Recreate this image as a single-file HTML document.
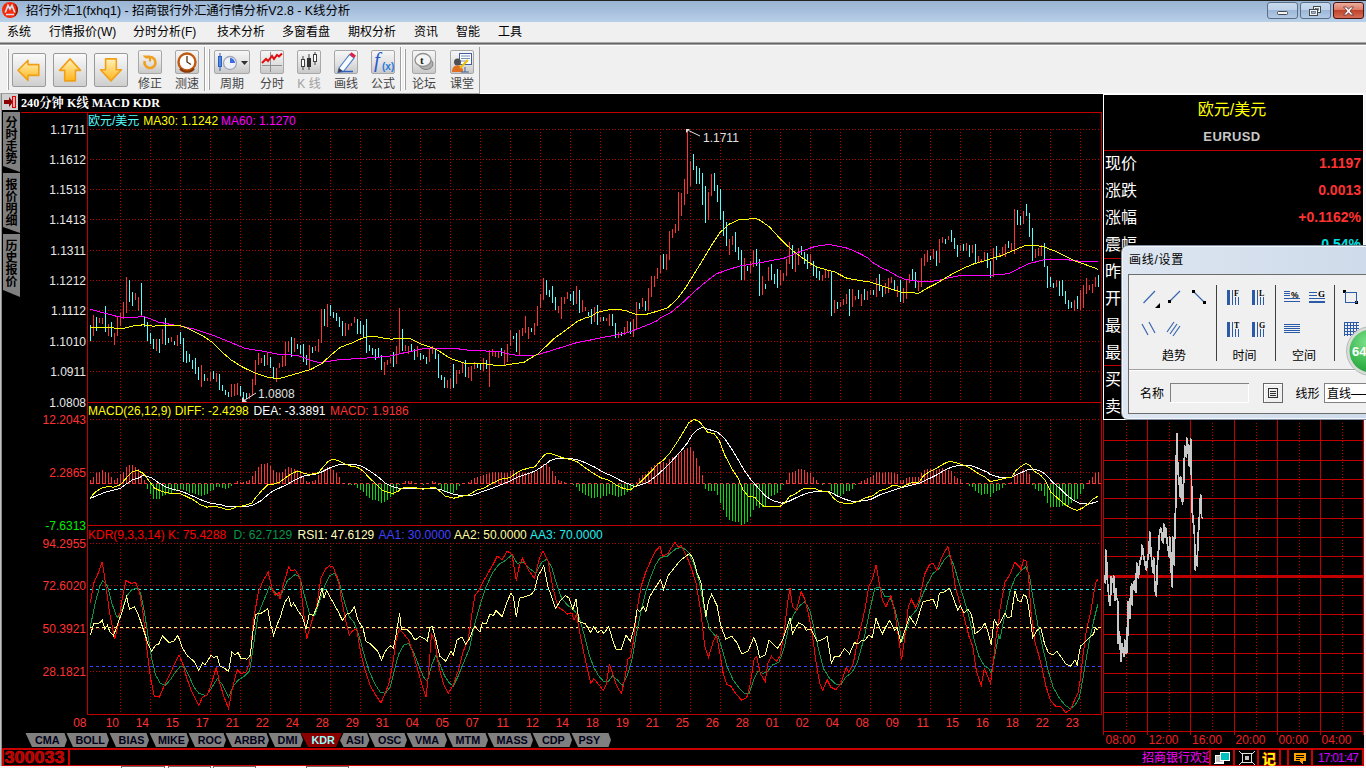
<!DOCTYPE html><html><head><meta charset="utf-8"><title>K线分析</title><style>
*{box-sizing:border-box;margin:0;padding:0}
html,body{width:1366px;height:768px;overflow:hidden;background:#f0f0f0;font-family:"Liberation Sans","Noto Sans CJK SC",sans-serif;font-size:12px}
.abs{position:absolute}
#title{left:0;top:0;width:1366px;height:22px;background:linear-gradient(#9ab5d3 0,#a4bdda 40%,#b9d0e9 100%);border-top:1px solid #222}
#title .t{left:26px;top:2px;font-size:12.4px;color:#000;white-space:nowrap;line-height:17px}
#menu{left:0;top:22px;width:1366px;height:20px;background:#f0f0f0}
#menu span{position:absolute;top:2px;line-height:16px;font-size:12px;color:#000;white-space:nowrap}
#tb{left:0;top:42px;width:1366px;height:52px;background:#f0f0f0}
.big{position:absolute;top:53px;width:34px;height:34px;border:1px solid #9a9a9a;border-radius:2px;background:linear-gradient(#fafafa,#e4e4e4 50%,#cfcfcf)}
.sm{position:absolute;top:50px;width:24px;height:24px;border:1px solid #a8a8a8;border-radius:2px;background:linear-gradient(#f6f6f6,#e2e2e2 55%,#c8c8c8)}
.lb{position:absolute;top:76px;font-size:12px;line-height:16px;color:#5a5a5a;white-space:nowrap;text-align:center;width:40px}
#dlg{left:1121px;top:245px;width:260px;height:175px;background:linear-gradient(90deg,#dde6f1,#cedaea);border:1px solid #7f8ea0;border-radius:7px;box-shadow:inset 0 0 0 1px #f4f8fc}
#dlg .cl{position:absolute;left:6px;top:28px;width:260px;height:140px;background:#f0f0f0;border:1px solid #6d6d6d}
.dt{position:absolute;font-size:12px;line-height:14px;color:#000;white-space:nowrap}
</style></head><body>
<div id="title" class="abs"><svg class="abs" style="left:0px;top:0px" width="20" height="20" viewBox="0 0 20 20"><circle cx="10" cy="9" r="8" fill="#f52a0a"/><path d="M14 2.100A8 8 0 0 1 14 15.900A12 12 0 0 0 14 2.100z" fill="#8a1a00"/><path d="M5.200 11.500L8 4.500L10 8L12 4.500L14.800 11.500" fill="none" stroke="#d4e2f2" stroke-width="1.700" stroke-linejoin="miter"/><path d="M6 13.500H14" stroke="#d4e2f2" stroke-width="1.500"/></svg><div class="abs t">招行外汇1(fxhq1) - 招商银行外汇通行情分析V2.8 - K线分析</div>
<svg class="abs" style="left:1266px;top:0px" width="100" height="20" viewBox="0 0 100 20"><defs><linearGradient id="g1" x1="0" y1="0" x2="0" y2="1"><stop offset="0" stop-color="#c9daee"/><stop offset=".5" stop-color="#bcd0e8"/><stop offset=".5" stop-color="#9db8d8"/><stop offset="1" stop-color="#b4cbe6"/></linearGradient><linearGradient id="g2" x1="0" y1="0" x2="0" y2="1"><stop offset="0" stop-color="#eeb0a0"/><stop offset=".5" stop-color="#d97660"/><stop offset=".5" stop-color="#c0452a"/><stop offset="1" stop-color="#d8705a"/></linearGradient></defs><rect x="1.5" y="1.5" width="30" height="16" rx="2.5" fill="url(#g1)" stroke="#5a6e88"/><rect x="34.500" y="1.5" width="30" height="16" rx="2.500" fill="url(#g1)" stroke="#5a6e88"/><rect x="67.500" y="1.5" width="30" height="16" rx="2.500" fill="url(#g2)" stroke="#4a1410"/><rect x="11.500" y="10.500" width="10" height="3" rx="1" fill="#f4f4f4" stroke="#404850"/><rect x="47.500" y="5.500" width="7" height="6" fill="#f4f4f4" stroke="#404850"/><rect x="49.500" y="7.500" width="3" height="2" fill="#9db8d8" stroke="#404850" stroke-width=".6"/><rect x="43.500" y="8.500" width="8" height="6" fill="#f4f4f4" stroke="#404850"/><rect x="45.500" y="10.500" width="4" height="2" fill="#9db8d8" stroke="#404850" stroke-width=".6"/><path d="M77.500 6l3 0l2 2.300l2-2.300l3 0l-3.600 4l3.600 4l-3 0l-2-2.300l-2 2.300l-3 0l3.600-4z" fill="#fff" stroke="#5a3030" stroke-width=".8"/></svg>
</div>
<div id="menu" class="abs">
<span style="left:7px">系统</span>
<span style="left:49px">行情报价(<u style="text-decoration:none;letter-spacing:0">W</u>)</span>
<span style="left:133px">分时分析(F)</span>
<span style="left:217px">技术分析</span>
<span style="left:282px">多窗看盘</span>
<span style="left:348px">期权分析</span>
<span style="left:414px">资讯</span>
<span style="left:456px">智能</span>
<span style="left:498px">工具</span>
</div>
<div id="tb" class="abs"><div class="abs" style="left:0;top:0;width:1366px;height:1px;background:#a8a8a8"></div><div class="abs" style="left:0;top:1px;width:1366px;height:1px;background:#666"></div><div class="abs" style="left:0;top:2px;width:1366px;height:1px;background:#a0a0a0"></div><div class="abs" style="left:0;top:3px;width:1366px;height:1px;background:#fff"></div><div class="abs" style="left:2px;top:5px;width:478px;height:47px;border-right:1px solid #a0a0a0"></div><div class="abs" style="left:7px;top:7px;width:2px;height:41px;border-left:1px solid #fff;border-right:1px solid #a0a0a0"></div><div class="abs" style="left:204px;top:5px;width:2px;height:44px;border-left:1px solid #a0a0a0;border-right:1px solid #fff"></div><div class="abs" style="left:208px;top:7px;width:2px;height:41px;border-left:1px solid #fff;border-right:1px solid #a0a0a0"></div><div class="abs" style="left:400px;top:5px;width:2px;height:44px;border-left:1px solid #a0a0a0;border-right:1px solid #fff"></div><div class="abs" style="left:404px;top:7px;width:2px;height:41px;border-left:1px solid #fff;border-right:1px solid #a0a0a0"></div><div class="abs" style="left:0;top:51px;width:480px;height:1px;background:#a0a0a0"></div><div class="abs" style="left:480px;top:51px;width:886px;height:1px;background:#fff"></div></div>
<div class="big" style="left:12px"><svg width="32" height="32" viewBox="0 0 32 32"><defs><linearGradient id="og" x1="0" y1="0" x2="0" y2="1"><stop offset="0" stop-color="#fff2b8"/><stop offset="1" stop-color="#ffb41a"/></linearGradient></defs><path d="M5 16.3L15 6.3V10.6H25.8V21.4H15V26.4z" fill="url(#og)" stroke="#f0a018" stroke-width="1.6" stroke-linejoin="round"/></svg></div>
<div class="big" style="left:53px"><svg width="32" height="32" viewBox="0 0 32 32"><path d="M16 4.9L26.5 16.4H21.4V26.9H10.7V16.4H5.6z" fill="url(#og)" stroke="#f0a018" stroke-width="1.6" stroke-linejoin="round"/></svg></div>
<div class="big" style="left:94px"><svg width="32" height="32" viewBox="0 0 32 32"><path d="M16 26.9L26.3 15.7H21.3V4.9H10.6V15.7H5.5z" fill="url(#og)" stroke="#f0a018" stroke-width="1.6" stroke-linejoin="round"/></svg></div>
<div class="sm" style="left:138px;width:24px"><svg width="22" height="22" viewBox="0 0 22 22"><path d="M11 6A5.500 5.500 0 1 1 5.700 10" fill="none" stroke="#f0a020" stroke-width="2.600" stroke-linecap="butt"/><path d="M11 5v5.500" stroke="#f0a020" stroke-width="2.200" fill="none"/><path d="M3.500 4.600h7.500v2.800h-4.300z" fill="#f0a020"/></svg></div><div class="lb" style="left:130px;color:#454545">修正</div>
<div class="sm" style="left:175px;width:24px"><svg width="22" height="22" viewBox="0 0 22 22"><circle cx="11" cy="11" r="8.500" fill="#fff" stroke="#c05a10" stroke-width="2.400"/><path d="M11 5v6l4 2.500" fill="none" stroke="#503010" stroke-width="1.300"/><path d="M4 17.500a9 9 0 0 0 14 0" fill="none" stroke="#8a3a08" stroke-width="2"/></svg></div><div class="lb" style="left:167px;color:#454545">测速</div>
<div class="sm" style="left:214px;width:36px"><svg width="34" height="22" viewBox="0 0 34 22"><rect x="3.500" y="5.500" width="3" height="10" fill="#7ab0f0" stroke="#2a60c0"/><path d="M5 2v18" stroke="#2a60c0"/><circle cx="15" cy="12" r="6.500" fill="#eef2f8" stroke="#a0a8b8" stroke-width="1.300"/><path d="M15 12V7a5 5 0 0 1 5 5z" fill="#3c6be0"/><path d="M26 10h7l-3.500 4z" fill="#303030"/></svg></div><div class="lb" style="left:212px;color:#454545">周期</div>
<div class="sm" style="left:260px;width:24px"><svg width="22" height="22" viewBox="0 0 22 22"><path d="M9.500 1v20M1 14.500h20" stroke="#909090"/><path d="M1 12l4-4l2 2l4-5l2 3l3-4l2 1.500l3-3" fill="none" stroke="#e01010" stroke-width="2"/></svg></div><div class="lb" style="left:252px;color:#454545">分时</div>
<div class="sm" style="left:297px;width:24px"><svg width="22" height="22" viewBox="0 0 22 22"><path d="M5 5v14M11 3v16M17 1v13" stroke="#404040"/><rect x="3.500" y="8.500" width="3" height="7" fill="#fff" stroke="#404040"/><rect x="9.500" y="7.500" width="3" height="8" fill="#303030" stroke="#303030"/><rect x="15.500" y="3.500" width="3" height="7" fill="#fff" stroke="#404040"/></svg></div><div class="lb" style="left:289px;color:#a0a0a0">K 线</div>
<div class="sm" style="left:334px;width:24px"><svg width="22" height="22" viewBox="0 0 22 22"><path d="M4 17L14.500 3.500l4.500 3.500L8.500 20.500l-5.500 1z" fill="#f8fbff" stroke="#5080c8" stroke-width="1.200"/><path d="M14.500 3.500l2-2.200l4.500 3.500l-2 2.200z" fill="#e02040"/><path d="M3 21.500l5.500-1l-4.500-3.500z" fill="#404040"/><path d="M6 20.500h12" stroke="#3060c0" stroke-width="1.500"/></svg></div><div class="lb" style="left:326px;color:#454545">画线</div>
<div class="sm" style="left:371px;width:24px"><svg width="22" height="22" viewBox="0 0 22 22"><text x="2" y="16" font-family="Liberation Serif,serif" font-style="italic" font-size="21" fill="#2a5ad0">f</text><text x="10" y="19" font-family="Liberation Sans,sans-serif" font-size="10" font-weight="bold" fill="#2a7ae0">(x)</text></svg></div><div class="lb" style="left:363px;color:#454545">公式</div>
<div class="sm" style="left:412px;width:24px"><svg width="22" height="22" viewBox="0 0 22 22"><ellipse cx="13" cy="13" rx="7" ry="5.500" fill="#b0b0b0" stroke="#808080"/><ellipse cx="10" cy="9" rx="8" ry="6.500" fill="#f4f4f4" stroke="#909090" stroke-width="1.300"/><text x="7" y="13" font-family="Liberation Serif,serif" font-weight="bold" font-size="11" fill="#202020">t</text></svg></div><div class="lb" style="left:404px;color:#454545">论坛</div>
<div class="sm" style="left:450px;width:24px"><svg width="22" height="22" viewBox="0 0 22 22"><rect x="8.500" y="2.500" width="12" height="11" fill="#fff" stroke="#4060a0"/><path d="M10 5h9M10 7.500h9M10 10h6" stroke="#7090c0"/><circle cx="6.500" cy="11" r="3.500" fill="#505050"/><path d="M1 21c0-5 2.500-6.500 5.500-6.500s5.500 1.500 5.500 6.500z" fill="#e07020"/><path d="M9 17l8-8" stroke="#f0c000" stroke-width="2"/><path d="M14 16v5M10 21h8" stroke="#4060a0"/></svg></div><div class="lb" style="left:442px;color:#454545">课堂</div>
<svg width="1366" height="768" viewBox="0 0 1366 768" style="position:absolute;left:0;top:0" font-family="'Liberation Sans','Noto Sans CJK SC',sans-serif">
<rect x="2" y="94" width="1362" height="672" fill="#000"/>
<g shape-rendering="crispEdges">
<line x1="21" y1="112.5" x2="1102" y2="112.5" stroke="#c00000" stroke-width="1"/>
<line x1="87.5" y1="112" x2="87.5" y2="715" stroke="#c00000" stroke-width="1"/>
<line x1="1101.5" y1="112" x2="1101.5" y2="715" stroke="#c00000" stroke-width="1"/>
<line x1="87" y1="402.5" x2="1102" y2="402.5" stroke="#c00000" stroke-width="1"/>
<line x1="87" y1="525.5" x2="1102" y2="525.5" stroke="#c00000" stroke-width="1"/>
<line x1="87" y1="714.5" x2="1102" y2="714.5" stroke="#c00000" stroke-width="1"/>
<line x1="90" y1="129.5" x2="1101" y2="129.5" stroke="#c00000" stroke-width="1" stroke-dasharray="1 2"/>
<line x1="90" y1="159.5" x2="1101" y2="159.5" stroke="#c00000" stroke-width="1" stroke-dasharray="1 2"/>
<line x1="90" y1="189.5" x2="1101" y2="189.5" stroke="#c00000" stroke-width="1" stroke-dasharray="1 2"/>
<line x1="90" y1="219.5" x2="1101" y2="219.5" stroke="#c00000" stroke-width="1" stroke-dasharray="1 2"/>
<line x1="90" y1="250.5" x2="1101" y2="250.5" stroke="#c00000" stroke-width="1" stroke-dasharray="1 2"/>
<line x1="90" y1="280.5" x2="1101" y2="280.5" stroke="#c00000" stroke-width="1" stroke-dasharray="1 2"/>
<line x1="90" y1="310.5" x2="1101" y2="310.5" stroke="#c00000" stroke-width="1" stroke-dasharray="1 2"/>
<line x1="90" y1="341.5" x2="1101" y2="341.5" stroke="#c00000" stroke-width="1" stroke-dasharray="1 2"/>
<line x1="90" y1="371.5" x2="1101" y2="371.5" stroke="#c00000" stroke-width="1" stroke-dasharray="1 2"/>
<line x1="90" y1="419.5" x2="1101" y2="419.5" stroke="#c00000" stroke-width="1" stroke-dasharray="1 2"/>
<line x1="90" y1="472.5" x2="1101" y2="472.5" stroke="#c00000" stroke-width="1" stroke-dasharray="1 2"/>
<line x1="90" y1="543.5" x2="1101" y2="543.5" stroke="#c00000" stroke-width="1" stroke-dasharray="1 2"/>
<line x1="90" y1="585.5" x2="1101" y2="585.5" stroke="#c00000" stroke-width="1" stroke-dasharray="1 2"/>
<line x1="90" y1="628.5" x2="1101" y2="628.5" stroke="#c00000" stroke-width="1" stroke-dasharray="1 2"/>
<line x1="90" y1="671.5" x2="1101" y2="671.5" stroke="#c00000" stroke-width="1" stroke-dasharray="1 2"/>
<line x1="120.5" y1="129" x2="120.5" y2="402" stroke="#c00000" stroke-width="1" stroke-dasharray="1 2"/>
<line x1="120.5" y1="420" x2="120.5" y2="525" stroke="#c00000" stroke-width="1" stroke-dasharray="1 2"/>
<line x1="120.5" y1="543" x2="120.5" y2="714" stroke="#c00000" stroke-width="1" stroke-dasharray="1 2"/>
<line x1="150.5" y1="129" x2="150.5" y2="402" stroke="#c00000" stroke-width="1" stroke-dasharray="1 2"/>
<line x1="150.5" y1="420" x2="150.5" y2="525" stroke="#c00000" stroke-width="1" stroke-dasharray="1 2"/>
<line x1="150.5" y1="543" x2="150.5" y2="714" stroke="#c00000" stroke-width="1" stroke-dasharray="1 2"/>
<line x1="180.5" y1="129" x2="180.5" y2="402" stroke="#c00000" stroke-width="1" stroke-dasharray="1 2"/>
<line x1="180.5" y1="420" x2="180.5" y2="525" stroke="#c00000" stroke-width="1" stroke-dasharray="1 2"/>
<line x1="180.5" y1="543" x2="180.5" y2="714" stroke="#c00000" stroke-width="1" stroke-dasharray="1 2"/>
<line x1="210.5" y1="129" x2="210.5" y2="402" stroke="#c00000" stroke-width="1" stroke-dasharray="1 2"/>
<line x1="210.5" y1="420" x2="210.5" y2="525" stroke="#c00000" stroke-width="1" stroke-dasharray="1 2"/>
<line x1="210.5" y1="543" x2="210.5" y2="714" stroke="#c00000" stroke-width="1" stroke-dasharray="1 2"/>
<line x1="240.5" y1="129" x2="240.5" y2="402" stroke="#c00000" stroke-width="1" stroke-dasharray="1 2"/>
<line x1="240.5" y1="420" x2="240.5" y2="525" stroke="#c00000" stroke-width="1" stroke-dasharray="1 2"/>
<line x1="240.5" y1="543" x2="240.5" y2="714" stroke="#c00000" stroke-width="1" stroke-dasharray="1 2"/>
<line x1="270.5" y1="129" x2="270.5" y2="402" stroke="#c00000" stroke-width="1" stroke-dasharray="1 2"/>
<line x1="270.5" y1="420" x2="270.5" y2="525" stroke="#c00000" stroke-width="1" stroke-dasharray="1 2"/>
<line x1="270.5" y1="543" x2="270.5" y2="714" stroke="#c00000" stroke-width="1" stroke-dasharray="1 2"/>
<line x1="300.5" y1="129" x2="300.5" y2="402" stroke="#c00000" stroke-width="1" stroke-dasharray="1 2"/>
<line x1="300.5" y1="420" x2="300.5" y2="525" stroke="#c00000" stroke-width="1" stroke-dasharray="1 2"/>
<line x1="300.5" y1="543" x2="300.5" y2="714" stroke="#c00000" stroke-width="1" stroke-dasharray="1 2"/>
<line x1="330.5" y1="129" x2="330.5" y2="402" stroke="#c00000" stroke-width="1" stroke-dasharray="1 2"/>
<line x1="330.5" y1="420" x2="330.5" y2="525" stroke="#c00000" stroke-width="1" stroke-dasharray="1 2"/>
<line x1="330.5" y1="543" x2="330.5" y2="714" stroke="#c00000" stroke-width="1" stroke-dasharray="1 2"/>
<line x1="360.5" y1="129" x2="360.5" y2="402" stroke="#c00000" stroke-width="1" stroke-dasharray="1 2"/>
<line x1="360.5" y1="420" x2="360.5" y2="525" stroke="#c00000" stroke-width="1" stroke-dasharray="1 2"/>
<line x1="360.5" y1="543" x2="360.5" y2="714" stroke="#c00000" stroke-width="1" stroke-dasharray="1 2"/>
<line x1="390.5" y1="129" x2="390.5" y2="402" stroke="#c00000" stroke-width="1" stroke-dasharray="1 2"/>
<line x1="390.5" y1="420" x2="390.5" y2="525" stroke="#c00000" stroke-width="1" stroke-dasharray="1 2"/>
<line x1="390.5" y1="543" x2="390.5" y2="714" stroke="#c00000" stroke-width="1" stroke-dasharray="1 2"/>
<line x1="420.5" y1="129" x2="420.5" y2="402" stroke="#c00000" stroke-width="1" stroke-dasharray="1 2"/>
<line x1="420.5" y1="420" x2="420.5" y2="525" stroke="#c00000" stroke-width="1" stroke-dasharray="1 2"/>
<line x1="420.5" y1="543" x2="420.5" y2="714" stroke="#c00000" stroke-width="1" stroke-dasharray="1 2"/>
<line x1="450.5" y1="129" x2="450.5" y2="402" stroke="#c00000" stroke-width="1" stroke-dasharray="1 2"/>
<line x1="450.5" y1="420" x2="450.5" y2="525" stroke="#c00000" stroke-width="1" stroke-dasharray="1 2"/>
<line x1="450.5" y1="543" x2="450.5" y2="714" stroke="#c00000" stroke-width="1" stroke-dasharray="1 2"/>
<line x1="480.5" y1="129" x2="480.5" y2="402" stroke="#c00000" stroke-width="1" stroke-dasharray="1 2"/>
<line x1="480.5" y1="420" x2="480.5" y2="525" stroke="#c00000" stroke-width="1" stroke-dasharray="1 2"/>
<line x1="480.5" y1="543" x2="480.5" y2="714" stroke="#c00000" stroke-width="1" stroke-dasharray="1 2"/>
<line x1="510.5" y1="129" x2="510.5" y2="402" stroke="#c00000" stroke-width="1" stroke-dasharray="1 2"/>
<line x1="510.5" y1="420" x2="510.5" y2="525" stroke="#c00000" stroke-width="1" stroke-dasharray="1 2"/>
<line x1="510.5" y1="543" x2="510.5" y2="714" stroke="#c00000" stroke-width="1" stroke-dasharray="1 2"/>
<line x1="540.5" y1="129" x2="540.5" y2="402" stroke="#c00000" stroke-width="1" stroke-dasharray="1 2"/>
<line x1="540.5" y1="420" x2="540.5" y2="525" stroke="#c00000" stroke-width="1" stroke-dasharray="1 2"/>
<line x1="540.5" y1="543" x2="540.5" y2="714" stroke="#c00000" stroke-width="1" stroke-dasharray="1 2"/>
<line x1="570.5" y1="129" x2="570.5" y2="402" stroke="#c00000" stroke-width="1" stroke-dasharray="1 2"/>
<line x1="570.5" y1="420" x2="570.5" y2="525" stroke="#c00000" stroke-width="1" stroke-dasharray="1 2"/>
<line x1="570.5" y1="543" x2="570.5" y2="714" stroke="#c00000" stroke-width="1" stroke-dasharray="1 2"/>
<line x1="600.5" y1="129" x2="600.5" y2="402" stroke="#c00000" stroke-width="1" stroke-dasharray="1 2"/>
<line x1="600.5" y1="420" x2="600.5" y2="525" stroke="#c00000" stroke-width="1" stroke-dasharray="1 2"/>
<line x1="600.5" y1="543" x2="600.5" y2="714" stroke="#c00000" stroke-width="1" stroke-dasharray="1 2"/>
<line x1="630.5" y1="129" x2="630.5" y2="402" stroke="#c00000" stroke-width="1" stroke-dasharray="1 2"/>
<line x1="630.5" y1="420" x2="630.5" y2="525" stroke="#c00000" stroke-width="1" stroke-dasharray="1 2"/>
<line x1="630.5" y1="543" x2="630.5" y2="714" stroke="#c00000" stroke-width="1" stroke-dasharray="1 2"/>
<line x1="660.5" y1="129" x2="660.5" y2="402" stroke="#c00000" stroke-width="1" stroke-dasharray="1 2"/>
<line x1="660.5" y1="420" x2="660.5" y2="525" stroke="#c00000" stroke-width="1" stroke-dasharray="1 2"/>
<line x1="660.5" y1="543" x2="660.5" y2="714" stroke="#c00000" stroke-width="1" stroke-dasharray="1 2"/>
<line x1="690.5" y1="129" x2="690.5" y2="402" stroke="#c00000" stroke-width="1" stroke-dasharray="1 2"/>
<line x1="690.5" y1="420" x2="690.5" y2="525" stroke="#c00000" stroke-width="1" stroke-dasharray="1 2"/>
<line x1="690.5" y1="543" x2="690.5" y2="714" stroke="#c00000" stroke-width="1" stroke-dasharray="1 2"/>
<line x1="720.5" y1="129" x2="720.5" y2="402" stroke="#c00000" stroke-width="1" stroke-dasharray="1 2"/>
<line x1="720.5" y1="420" x2="720.5" y2="525" stroke="#c00000" stroke-width="1" stroke-dasharray="1 2"/>
<line x1="720.5" y1="543" x2="720.5" y2="714" stroke="#c00000" stroke-width="1" stroke-dasharray="1 2"/>
<line x1="750.5" y1="129" x2="750.5" y2="402" stroke="#c00000" stroke-width="1" stroke-dasharray="1 2"/>
<line x1="750.5" y1="420" x2="750.5" y2="525" stroke="#c00000" stroke-width="1" stroke-dasharray="1 2"/>
<line x1="750.5" y1="543" x2="750.5" y2="714" stroke="#c00000" stroke-width="1" stroke-dasharray="1 2"/>
<line x1="780.5" y1="129" x2="780.5" y2="402" stroke="#c00000" stroke-width="1" stroke-dasharray="1 2"/>
<line x1="780.5" y1="420" x2="780.5" y2="525" stroke="#c00000" stroke-width="1" stroke-dasharray="1 2"/>
<line x1="780.5" y1="543" x2="780.5" y2="714" stroke="#c00000" stroke-width="1" stroke-dasharray="1 2"/>
<line x1="810.5" y1="129" x2="810.5" y2="402" stroke="#c00000" stroke-width="1" stroke-dasharray="1 2"/>
<line x1="810.5" y1="420" x2="810.5" y2="525" stroke="#c00000" stroke-width="1" stroke-dasharray="1 2"/>
<line x1="810.5" y1="543" x2="810.5" y2="714" stroke="#c00000" stroke-width="1" stroke-dasharray="1 2"/>
<line x1="840.5" y1="129" x2="840.5" y2="402" stroke="#c00000" stroke-width="1" stroke-dasharray="1 2"/>
<line x1="840.5" y1="420" x2="840.5" y2="525" stroke="#c00000" stroke-width="1" stroke-dasharray="1 2"/>
<line x1="840.5" y1="543" x2="840.5" y2="714" stroke="#c00000" stroke-width="1" stroke-dasharray="1 2"/>
<line x1="870.5" y1="129" x2="870.5" y2="402" stroke="#c00000" stroke-width="1" stroke-dasharray="1 2"/>
<line x1="870.5" y1="420" x2="870.5" y2="525" stroke="#c00000" stroke-width="1" stroke-dasharray="1 2"/>
<line x1="870.5" y1="543" x2="870.5" y2="714" stroke="#c00000" stroke-width="1" stroke-dasharray="1 2"/>
<line x1="900.5" y1="129" x2="900.5" y2="402" stroke="#c00000" stroke-width="1" stroke-dasharray="1 2"/>
<line x1="900.5" y1="420" x2="900.5" y2="525" stroke="#c00000" stroke-width="1" stroke-dasharray="1 2"/>
<line x1="900.5" y1="543" x2="900.5" y2="714" stroke="#c00000" stroke-width="1" stroke-dasharray="1 2"/>
<line x1="930.5" y1="129" x2="930.5" y2="402" stroke="#c00000" stroke-width="1" stroke-dasharray="1 2"/>
<line x1="930.5" y1="420" x2="930.5" y2="525" stroke="#c00000" stroke-width="1" stroke-dasharray="1 2"/>
<line x1="930.5" y1="543" x2="930.5" y2="714" stroke="#c00000" stroke-width="1" stroke-dasharray="1 2"/>
<line x1="960.5" y1="129" x2="960.5" y2="402" stroke="#c00000" stroke-width="1" stroke-dasharray="1 2"/>
<line x1="960.5" y1="420" x2="960.5" y2="525" stroke="#c00000" stroke-width="1" stroke-dasharray="1 2"/>
<line x1="960.5" y1="543" x2="960.5" y2="714" stroke="#c00000" stroke-width="1" stroke-dasharray="1 2"/>
<line x1="990.5" y1="129" x2="990.5" y2="402" stroke="#c00000" stroke-width="1" stroke-dasharray="1 2"/>
<line x1="990.5" y1="420" x2="990.5" y2="525" stroke="#c00000" stroke-width="1" stroke-dasharray="1 2"/>
<line x1="990.5" y1="543" x2="990.5" y2="714" stroke="#c00000" stroke-width="1" stroke-dasharray="1 2"/>
<line x1="1020.5" y1="129" x2="1020.5" y2="402" stroke="#c00000" stroke-width="1" stroke-dasharray="1 2"/>
<line x1="1020.5" y1="420" x2="1020.5" y2="525" stroke="#c00000" stroke-width="1" stroke-dasharray="1 2"/>
<line x1="1020.5" y1="543" x2="1020.5" y2="714" stroke="#c00000" stroke-width="1" stroke-dasharray="1 2"/>
<line x1="1050.5" y1="129" x2="1050.5" y2="402" stroke="#c00000" stroke-width="1" stroke-dasharray="1 2"/>
<line x1="1050.5" y1="420" x2="1050.5" y2="525" stroke="#c00000" stroke-width="1" stroke-dasharray="1 2"/>
<line x1="1050.5" y1="543" x2="1050.5" y2="714" stroke="#c00000" stroke-width="1" stroke-dasharray="1 2"/>
<line x1="1080.5" y1="129" x2="1080.5" y2="402" stroke="#c00000" stroke-width="1" stroke-dasharray="1 2"/>
<line x1="1080.5" y1="420" x2="1080.5" y2="525" stroke="#c00000" stroke-width="1" stroke-dasharray="1 2"/>
<line x1="1080.5" y1="543" x2="1080.5" y2="714" stroke="#c00000" stroke-width="1" stroke-dasharray="1 2"/>
<line x1="90" y1="483.5" x2="1101" y2="483.5" stroke="#ff3232" stroke-width="1" stroke-dasharray="3 3"/>
<line x1="90" y1="589.5" x2="1101" y2="589.5" stroke="#20f0f0" stroke-width="1" stroke-dasharray="3 3"/>
<line x1="90" y1="627.5" x2="1101" y2="627.5" stroke="#ffff80" stroke-width="1" stroke-dasharray="3 3"/>
<line x1="90" y1="666.5" x2="1101" y2="666.5" stroke="#4040ff" stroke-width="1" stroke-dasharray="3 3"/>
<path d="M93.5 315V336M99.5 318V323M102.5 318V324M108.5 324V336M114.5 333V345M117.5 317V336M120.5 313V326M123.5 302V319M126.5 277V313M135.5 293V300M138.5 297V311M156.5 339V351M162.5 329V344M171.5 337V342M177.5 335V346M201.5 365V387M207.5 378V381M210.5 372V381M216.5 373V382M231.5 384V397M234.5 384V396M237.5 383V395M249.5 393V399M252.5 379V395M255.5 360V385M258.5 353V365M261.5 358V363M267.5 353V365M276.5 368V382M279.5 363V368M282.5 356V367M285.5 342V366M288.5 341V352M294.5 338V352M309.5 345V369M315.5 346V351M318.5 339V352M321.5 309V343M327.5 304V327M345.5 323V336M348.5 324V330M351.5 323V326M354.5 317V323M384.5 362V375M387.5 360V365M390.5 358V363M396.5 346V364M399.5 308V354M405.5 345V351M408.5 346V354M417.5 346V357M429.5 349V362M432.5 346V354M447.5 380V388M450.5 378V389M456.5 370V384M459.5 370V374M462.5 363V373M468.5 367V378M471.5 366V381M474.5 362V369M483.5 358V371M489.5 350V387M492.5 349V356M495.5 352V357M498.5 352V358M504.5 350V365M507.5 344V362M510.5 330V346M519.5 330V355M522.5 328V336M525.5 316V333M528.5 327V339M534.5 323V335M537.5 306V326M540.5 294V308M543.5 278V300M558.5 306V313M561.5 297V319M564.5 297V304M567.5 292V299M576.5 286V304M582.5 300V312M585.5 307V311M594.5 307V322M600.5 317V322M606.5 318V321M609.5 314V326M618.5 332V338M624.5 327V335M627.5 321V332M633.5 319V337M636.5 302V330M642.5 298V307M648.5 288V311M651.5 276V297M654.5 276V287M657.5 268V279M660.5 255V273M666.5 254V270M669.5 231V260M672.5 229V238M675.5 224V233M678.5 192V231M681.5 193V216M684.5 179V205M687.5 130V194M690.5 161V186M708.5 192V220M711.5 174V196M729.5 239V255M732.5 236V245M744.5 258V280M750.5 261V273M753.5 250V267M762.5 276V295M768.5 267V281M780.5 270V285M783.5 273V281M786.5 259V276M789.5 242V264M795.5 254V272M798.5 248V265M810.5 254V266M822.5 275V281M825.5 270V278M828.5 270V278M834.5 300V313M840.5 302V307M843.5 299V305M846.5 294V304M852.5 289V307M855.5 296V300M861.5 294V306M867.5 291V300M870.5 290V295M876.5 278V297M885.5 283V294M888.5 278V293M891.5 277V283M897.5 286V297M903.5 288V303M906.5 279V299M909.5 274V283M918.5 281V291M921.5 258V287M924.5 254V266M927.5 250V262M933.5 249V259M939.5 239V263M942.5 237V243M948.5 236V240M960.5 245V251M966.5 243V251M972.5 245V253M978.5 256V263M981.5 259V263M984.5 252V261M993.5 248V277M999.5 253V257M1002.5 247V255M1005.5 244V257M1011.5 243V251M1014.5 209V254M1023.5 211V224M1035.5 249V258M1038.5 248V256M1041.5 245V256M1056.5 280V287M1074.5 300V311M1080.5 290V310M1083.5 285V308M1086.5 278V294M1089.5 285V290M1092.5 284V293M1095.5 277V287" stroke="#ff3232" stroke-width="1" fill="none"/>
<path d="M90.5 325V341M96.5 317V331M105.5 306V332M111.5 322V337M129.5 280V302M132.5 292V306M141.5 283V316M144.5 317V327M147.5 322V341M150.5 333V344M153.5 339V349M159.5 339V353M165.5 318V345M168.5 338V343M174.5 341V345M180.5 332V344M183.5 338V362M186.5 351V363M189.5 354V362M192.5 360V369M195.5 358V374M198.5 367V380M204.5 374V381M213.5 371V379M219.5 374V390M222.5 385V391M225.5 390V395M228.5 392V397M240.5 386V396M243.5 392V401M246.5 393V399M264.5 355V366M270.5 357V368M273.5 367V378M291.5 337V357M297.5 344V349M300.5 345V354M303.5 344V362M306.5 355V365M312.5 347V353M324.5 309V326M330.5 305V316M333.5 312V318M336.5 313V321M339.5 317V327M342.5 321V336M357.5 319V334M360.5 321V334M363.5 325V338M366.5 319V353M369.5 345V351M372.5 348V355M375.5 349V360M378.5 348V358M381.5 355V370M393.5 352V367M402.5 329V351M411.5 344V352M414.5 349V360M420.5 353V360M423.5 355V359M426.5 357V364M435.5 348V359M438.5 354V378M441.5 375V380M444.5 377V388M453.5 364V388M465.5 360V377M477.5 364V368M480.5 364V370M486.5 360V369M501.5 348V356M513.5 336V339M516.5 333V352M531.5 328V332M546.5 280V295M549.5 290V297M552.5 286V303M555.5 297V310M570.5 294V301M573.5 291V305M579.5 290V313M588.5 312V316M591.5 309V324M597.5 305V325M603.5 317V321M612.5 314V326M615.5 323V338M621.5 332V336M630.5 322V334M639.5 303V309M645.5 301V311M663.5 254V269M693.5 154V170M696.5 166V184M699.5 168V184M702.5 173V205M705.5 186V223M714.5 173V191M717.5 185V202M720.5 189V220M723.5 211V236M726.5 222V246M735.5 232V252M738.5 247V260M741.5 250V280M747.5 266V271M756.5 249V266M759.5 259V296M765.5 284V289M771.5 264V280M774.5 274V284M777.5 269V288M792.5 245V269M801.5 246V255M804.5 252V264M807.5 254V269M813.5 261V276M816.5 266V278M819.5 271V280M831.5 272V316M837.5 302V309M849.5 289V316M858.5 290V299M864.5 289V300M873.5 290V295M879.5 274V291M882.5 286V297M894.5 280V290M900.5 280V302M912.5 269V280M915.5 272V288M930.5 256V260M936.5 251V266M945.5 239V244M951.5 230V242M954.5 238V249M957.5 245V257M963.5 244V251M969.5 245V257M975.5 244V264M987.5 253V268M990.5 261V278M996.5 246V260M1008.5 241V248M1017.5 210V225M1020.5 216V225M1026.5 204V216M1029.5 213V237M1032.5 228V261M1044.5 243V267M1047.5 266V288M1050.5 277V287M1053.5 283V288M1059.5 281V296M1062.5 280V296M1065.5 291V304M1068.5 300V309M1071.5 302V308M1077.5 296V309M1098.5 275V287" stroke="#54ffff" stroke-width="1" fill="none"/>
<path d="M90.5 480V484M93.5 477V484M96.5 473V484M99.5 472V484M102.5 470V484M105.5 472V484M108.5 473V484M111.5 477V484M114.5 480V484M117.5 478V484M120.5 474V484M123.5 472V484M126.5 467V484M129.5 465V484M132.5 465V484M135.5 467V484M138.5 469V484M141.5 474V484M144.5 480V484M237.5 481V484M240.5 482V484M243.5 482V484M246.5 481V484M249.5 480V484M252.5 476V484M255.5 471V484M258.5 467V484M261.5 464V484M264.5 464V484M267.5 463V484M270.5 466V484M273.5 470V484M276.5 472V484M279.5 473V484M282.5 472V484M285.5 469V484M288.5 467V484M291.5 468V484M294.5 469V484M297.5 470V484M300.5 473V484M303.5 477V484M306.5 481V484M309.5 482V484M312.5 481V484M315.5 480V484M318.5 475V484M321.5 471V484M324.5 469V484M327.5 467V484M330.5 468V484M333.5 470V484M336.5 473V484M339.5 477V484M405.5 481V484M408.5 481V484M411.5 481V484M432.5 481V484M435.5 482V484M468.5 482V484M471.5 480V484M474.5 478V484M477.5 477V484M480.5 476V484M483.5 475V484M486.5 474V484M489.5 473V484M492.5 472V484M495.5 472V484M498.5 472V484M501.5 472V484M504.5 473V484M507.5 473V484M510.5 471V484M513.5 470V484M516.5 473V484M519.5 473V484M522.5 473V484M525.5 473V484M528.5 472V484M531.5 472V484M534.5 472V484M537.5 471V484M540.5 468V484M543.5 464V484M546.5 464V484M549.5 467V484M552.5 471V484M555.5 476V484M558.5 480V484M561.5 481V484M564.5 482V484M636.5 482V484M639.5 478V484M642.5 475V484M645.5 474V484M648.5 471V484M651.5 467V484M654.5 465V484M657.5 463V484M660.5 461V484M663.5 462V484M666.5 463V484M669.5 459V484M672.5 457V484M675.5 456V484M678.5 454V484M681.5 452V484M684.5 450V484M687.5 448V484M690.5 447V484M693.5 451V484M696.5 458V484M699.5 466V484M702.5 475V484M786.5 480V484M789.5 473V484M792.5 472V484M795.5 471V484M798.5 469V484M801.5 469V484M804.5 470V484M807.5 472V484M810.5 473V484M813.5 477V484M816.5 480V484M861.5 481V484M864.5 480V484M867.5 478V484M870.5 477V484M873.5 475V484M876.5 472V484M879.5 472V484M882.5 473V484M885.5 472V484M888.5 472V484M891.5 472V484M894.5 473V484M897.5 474V484M900.5 480V484M903.5 480V484M906.5 478V484M909.5 477V484M912.5 477V484M915.5 477V484M918.5 477V484M921.5 473V484M924.5 470V484M927.5 469V484M930.5 469V484M933.5 469V484M936.5 470V484M939.5 469V484M942.5 468V484M945.5 469V484M948.5 470V484M951.5 471V484M954.5 476V484M957.5 478V484M960.5 479V484M1011.5 482V484M1014.5 474V484M1017.5 474V484M1020.5 473V484M1023.5 469V484M1026.5 470V484M1029.5 474V484M1089.5 480V484M1092.5 477V484M1095.5 473V484M1098.5 472V484" stroke="#ff3232" stroke-width="1" fill="none"/>
<path d="M147.5 484V489M150.5 484V494M153.5 484V499M156.5 484V499M159.5 484V499M162.5 484V496M165.5 484V495M168.5 484V494M171.5 484V493M174.5 484V491M177.5 484V490M180.5 484V489M183.5 484V490M186.5 484V491M189.5 484V493M192.5 484V493M195.5 484V494M198.5 484V495M201.5 484V496M204.5 484V495M207.5 484V494M210.5 484V491M213.5 484V490M216.5 484V487M219.5 484V487M222.5 484V488M225.5 484V489M228.5 484V488M231.5 484V486M348.5 484V485M351.5 484V485M354.5 484V485M357.5 484V488M360.5 484V490M363.5 484V492M366.5 484V496M369.5 484V498M372.5 484V500M375.5 484V500M378.5 484V501M381.5 484V503M384.5 484V502M387.5 484V500M390.5 484V497M393.5 484V495M396.5 484V491M399.5 484V485M423.5 484V485M438.5 484V485M441.5 484V489M444.5 484V491M447.5 484V493M450.5 484V494M453.5 484V493M456.5 484V490M459.5 484V486M573.5 484V485M576.5 484V487M579.5 484V491M582.5 484V493M585.5 484V495M588.5 484V496M591.5 484V498M594.5 484V498M597.5 484V497M600.5 484V498M603.5 484V496M606.5 484V496M609.5 484V494M612.5 484V495M615.5 484V496M618.5 484V497M621.5 484V496M624.5 484V495M627.5 484V492M630.5 484V491M633.5 484V487M705.5 484V489M708.5 484V491M711.5 484V491M714.5 484V491M717.5 484V495M720.5 484V503M723.5 484V510M726.5 484V517M729.5 484V520M732.5 484V521M735.5 484V522M738.5 484V522M741.5 484V525M744.5 484V524M747.5 484V522M750.5 484V517M753.5 484V510M756.5 484V506M759.5 484V508M762.5 484V507M765.5 484V506M768.5 484V498M771.5 484V496M774.5 484V495M777.5 484V493M780.5 484V490M783.5 484V485M822.5 484V485M831.5 484V491M834.5 484V495M837.5 484V497M840.5 484V496M843.5 484V494M846.5 484V491M849.5 484V491M852.5 484V489M855.5 484V485M969.5 484V486M972.5 484V487M975.5 484V491M978.5 484V493M981.5 484V495M984.5 484V494M987.5 484V494M990.5 484V497M993.5 484V493M996.5 484V491M999.5 484V490M1002.5 484V488M1005.5 484V485M1032.5 484V485M1035.5 484V489M1038.5 484V491M1041.5 484V491M1044.5 484V496M1047.5 484V503M1050.5 484V507M1053.5 484V507M1056.5 484V507M1059.5 484V507M1062.5 484V506M1065.5 484V506M1068.5 484V505M1071.5 484V503M1074.5 484V501M1077.5 484V499M1080.5 484V494M1083.5 484V489" stroke="#00e000" stroke-width="1" fill="none"/>
</g>
<polyline points="90.5,309.3 105.1,313.3 117.8,316.6 124.2,317.9 136.0,317.5 141.5,316.0 147.9,317.9 157.9,321.9 172.5,324.8 183.5,326.6 194.4,329.2 212.6,335.2 230.9,342.5 245.4,348.5 260.0,350.7 274.6,353.4 280.0,354.7 290.9,354.9 300.1,356.2 309.2,359.8 318.3,362.5 327.4,361.6 338.3,359.8 352.9,358.9 367.5,358.0 378.5,357.1 389.4,356.2 404.0,352.9 414.9,350.7 420.4,349.2 431.3,348.0 444.1,348.0 458.7,348.9 469.6,350.3 475.0,350.7 489.6,351.1 500.5,351.6 507.8,353.8 516.9,355.3 535.2,355.3 547.9,351.6 562.5,347.1 577.1,342.5 591.7,339.8 602.6,337.4 615.4,335.2 626.3,333.0 639.1,328.3 650.0,323.9 657.3,320.6 660.0,318.0 670.9,312.5 681.9,303.4 696.5,289.7 707.4,280.6 716.5,273.7 729.3,269.3 740.2,266.0 751.2,264.2 762.1,262.4 773.0,260.2 784.0,258.2 794.9,253.8 805.9,249.6 815.0,246.5 824.1,245.1 828.6,244.2 835.0,245.6 846.0,247.8 850.0,249.3 859.1,253.3 867.3,257.5 872.8,262.6 881.0,267.5 888.3,270.8 897.4,276.2 904.7,279.3 913.8,280.8 924.7,281.5 937.5,280.8 948.5,277.9 959.4,275.7 974.0,275.1 992.2,275.1 997.7,274.6 1000.0,274.5 1009.3,273.6 1018.6,268.5 1028.8,263.5 1036.4,261.8 1044.0,259.6 1055.8,259.2 1067.7,259.7 1074.5,260.9 1088.0,261.3 1098.2,261.3" fill="none" stroke="#ff00ff" stroke-width="1" shape-rendering="crispEdges" />
<polyline points="90.5,327.4 105.1,327.0 117.8,328.4 124.2,328.3 132.4,326.1 143.3,324.8 152.5,326.1 165.2,325.7 179.8,325.5 188.9,328.8 201.7,335.2 212.6,342.5 223.6,353.4 230.9,359.8 241.8,366.7 254.6,372.9 267.3,377.1 276.4,378.6 280.0,378.4 290.9,375.3 300.1,372.6 311.0,369.3 321.9,363.5 330.1,355.8 340.2,347.4 352.9,342.5 362.0,338.3 369.3,336.5 376.6,336.6 383.9,338.3 391.2,339.2 400.3,338.3 409.4,338.3 420.4,343.8 431.3,347.4 438.6,350.7 449.6,358.0 456.8,360.7 466.0,363.5 475.1,363.5 475.0,363.8 485.9,364.0 495.1,365.3 504.2,365.3 513.3,363.8 524.2,362.2 531.5,357.5 538.8,353.5 546.1,346.2 553.4,338.9 560.7,333.9 569.8,327.0 577.1,321.5 584.4,318.3 591.7,316.1 597.2,312.4 606.3,310.2 612.6,309.3 624.5,310.2 631.8,313.0 636.3,314.6 646.4,314.3 657.3,311.2 660.0,310.2 667.3,308.0 676.4,299.8 685.5,287.9 692.8,276.1 701.9,261.5 711.0,246.0 720.2,232.3 729.3,224.1 738.4,219.9 749.3,219.0 754.8,218.3 759.4,219.9 769.4,226.9 778.5,236.9 787.6,246.0 794.9,252.4 802.2,257.8 809.5,262.8 816.8,267.0 824.1,269.1 835.0,272.1 846.0,277.9 850.0,278.8 860.9,280.6 870.1,282.1 881.0,285.7 891.9,289.4 902.9,292.5 912.0,292.6 918.4,293.4 926.6,288.5 935.7,283.9 944.8,278.4 953.9,273.0 963.0,268.4 974.0,263.8 984.9,260.7 995.9,257.1 1000.0,256.2 1008.5,252.5 1016.9,249.1 1025.4,245.4 1036.4,245.4 1044.0,247.0 1054.2,250.8 1064.3,255.5 1074.5,260.9 1084.6,264.3 1093.1,267.4 1098.2,269.4" fill="none" stroke="#ffff00" stroke-width="1" shape-rendering="crispEdges" />
<polyline points="90.1,498.5 96.8,495.6 105.3,492.2 113.8,490.0 120.5,488.3 126.5,483.8 132.4,479.9 139.2,477.8 143.4,475.3 151.0,477.5 157.8,482.1 166.2,487.2 174.7,489.7 181.5,491.4 189.9,494.8 200.1,499.5 210.2,503.2 220.4,504.6 228.8,507.0 240.7,506.6 251.7,505.8 261.0,500.7 267.8,494.8 272.8,491.0 279.6,488.0 288.1,483.8 296.5,479.2 303.3,476.2 310.1,475.0 314.3,474.6 315.0,474.5 321.8,471.9 330.2,467.7 338.7,464.8 348.8,464.3 359.0,465.2 365.8,468.5 372.5,472.8 379.3,477.8 386.1,483.8 392.8,486.6 399.6,488.3 409.8,488.5 419.9,488.5 433.5,488.5 440.2,489.4 448.7,492.7 455.5,494.8 463.9,495.6 472.4,495.3 480.8,492.2 491.0,488.8 501.2,484.6 509.6,481.2 518.1,477.0 526.5,474.1 535.0,471.1 541.8,466.8 544.3,464.6 545.0,464.8 550.1,460.6 556.8,458.4 570.4,458.4 578.8,460.1 587.3,463.5 595.8,467.7 604.2,472.8 612.7,476.2 621.2,480.9 629.6,484.3 634.7,486.6 641.5,484.6 648.2,482.1 655.0,477.0 663.5,469.4 671.9,460.9 680.4,451.6 687.2,443.2 692.2,434.7 697.3,429.6 702.4,427.6 709.2,429.6 717.6,432.2 724.4,438.1 731.2,448.2 737.9,459.2 744.7,471.1 751.5,480.4 758.2,488.0 765.0,495.6 770.1,499.0 774.3,501.2 775.0,501.2 781.8,503.2 788.5,501.5 798.7,496.5 808.8,492.6 817.3,491.4 829.2,491.4 835.9,495.3 844.4,499.0 851.2,501.2 859.6,501.2 869.8,499.8 879.9,494.8 890.1,491.4 900.2,488.0 910.4,485.5 920.5,482.9 929.0,478.7 937.5,474.5 945.9,469.4 952.7,466.8 959.5,465.2 969.6,465.2 978.1,468.2 986.5,471.9 989.9,473.8 990.0,474.5 998.5,477.0 1012.0,477.0 1020.5,472.8 1028.9,469.4 1039.1,470.2 1045.8,474.5 1052.6,482.1 1059.4,488.0 1066.2,494.8 1072.9,499.8 1079.7,503.6 1088.2,504.1 1094.9,502.4 1098.0,501.2" fill="none" stroke="#ffffff" stroke-width="1" shape-rendering="crispEdges" />
<polyline points="90.1,497.8 96.0,491.4 101.9,488.0 107.8,486.6 113.8,487.2 120.5,484.6 126.5,477.8 132.4,471.9 137.5,470.2 143.4,473.6 149.3,481.2 154.4,488.0 159.5,490.5 166.2,492.7 173.0,493.4 179.8,493.4 186.5,496.5 193.3,499.8 200.1,504.6 206.8,507.1 213.6,506.3 220.4,507.5 225.5,509.2 230.5,509.2 237.3,506.6 244.1,505.8 251.7,503.2 255.9,497.3 261.8,490.5 267.8,484.6 272.8,484.3 279.6,482.1 286.4,477.0 293.2,472.8 298.2,471.1 303.3,473.1 308.4,474.5 313.5,473.8 315.0,473.6 318.4,472.8 322.6,467.7 327.7,461.8 332.8,459.2 337.8,460.4 343.8,463.5 350.5,466.0 357.3,467.2 363.2,471.1 369.2,477.8 375.9,483.8 382.7,490.5 387.8,492.2 392.8,493.4 397.9,491.4 401.3,488.3 406.4,487.5 412.3,487.5 416.5,488.0 423.3,489.2 430.1,488.0 435.2,487.7 440.2,491.4 445.3,496.1 450.4,497.3 453.8,498.2 460.5,496.5 469.0,494.8 475.8,490.5 484.2,488.0 492.7,482.9 501.2,479.2 509.6,477.8 515.5,473.6 521.5,470.2 528.2,468.2 535.0,466.8 540.1,460.1 544.3,455.0 545.0,454.2 550.1,453.3 555.2,455.0 561.9,457.5 570.4,459.6 577.2,461.8 583.9,466.8 592.4,472.8 600.8,477.8 609.3,480.4 617.8,486.0 624.5,488.8 630.5,489.7 636.4,485.5 643.2,479.5 649.9,472.8 656.7,465.2 663.5,460.1 670.2,452.5 677.0,442.3 683.8,431.3 688.8,422.8 693.9,419.5 699.0,421.2 703.2,426.2 707.5,432.2 714.2,433.8 719.3,440.6 724.4,454.2 731.2,467.7 737.9,477.8 743.0,489.7 748.1,496.1 754.8,497.3 759.9,503.2 765.0,507.0 773.5,506.6 775.0,507.0 780.1,506.3 785.2,502.4 789.4,496.5 795.3,493.9 802.1,489.2 808.8,488.0 814.8,488.3 819.0,490.5 829.2,492.2 833.4,498.2 839.3,502.4 846.1,503.6 851.2,503.7 857.9,501.5 864.7,498.2 873.2,495.6 879.9,490.5 886.7,488.8 891.8,485.8 896.8,485.5 901.9,487.2 907.0,484.6 912.1,482.6 918.8,482.6 923.9,475.3 930.7,471.1 937.5,467.7 944.2,463.5 950.2,461.3 956.1,462.6 962.8,464.8 969.6,467.7 976.4,472.4 984.8,477.0 989.1,480.4 990.0,481.6 996.8,480.4 1005.2,478.2 1012.0,477.0 1015.4,471.1 1020.5,466.8 1025.5,463.5 1029.8,465.2 1034.0,471.1 1040.8,475.3 1045.8,481.2 1050.9,492.2 1057.7,498.2 1064.5,504.1 1071.2,508.3 1077.2,510.3 1082.2,508.3 1088.2,503.6 1093.2,499.0 1098.0,496.1" fill="none" stroke="#ffff00" stroke-width="1" shape-rendering="crispEdges" />
<polyline points="90.4,626.5 94.9,604.3 99.9,585.7 102.8,580.7 107.3,585.7 112.2,604.3 117.2,617.9 122.1,609.2 127.1,595.6 132.0,589.4 137.0,588.2 140.7,593.1 144.4,611.7 148.1,636.4 151.8,658.7 155.5,674.8 160.5,683.5 165.4,685.2 170.4,679.8 175.3,672.3 180.3,666.1 184.0,666.1 189.0,676.0 193.9,687.2 198.9,693.4 206.3,695.8 211.2,688.4 217.4,678.5 222.4,684.7 228.6,697.1 233.5,685.9 238.5,679.8 244.7,676.0 249.6,671.1 253.3,646.3 258.3,614.2 263.2,601.8 269.4,586.9 273.1,590.6 278.1,595.6 280.0,596.8 287.4,580.7 294.9,574.6 299.8,577.0 304.8,596.8 309.7,614.2 314.7,615.4 319.6,601.8 324.6,585.7 329.5,575.8 334.5,573.3 339.4,583.2 344.4,601.8 349.3,616.6 354.3,622.8 359.2,636.4 364.2,655.0 369.1,671.1 375.3,684.7 380.2,692.1 385.2,693.4 390.1,687.2 395.1,667.4 398.8,653.8 403.8,645.1 408.7,643.4 413.7,652.5 418.6,664.9 423.6,677.3 427.3,681.0 432.2,663.7 435.9,655.0 439.7,663.7 444.6,676.0 449.6,683.5 453.3,685.9 458.2,676.0 463.2,663.7 469.4,648.8 474.3,625.3 475.0,622.8 480.0,605.5 486.1,586.9 492.3,573.3 498.5,564.7 504.7,560.9 512.1,554.8 517.1,563.4 523.3,562.2 529.5,568.4 535.6,573.3 541.8,562.2 546.8,559.2 551.7,567.1 556.7,584.5 561.6,598.1 567.8,605.5 574.0,610.4 579.0,616.6 583.9,634.0 588.9,653.8 593.8,667.4 598.8,676.0 603.7,681.5 608.7,681.0 612.4,676.0 617.3,679.8 622.3,685.4 627.2,676.0 632.2,658.7 635.9,636.4 640.8,611.7 645.8,591.9 650.7,577.0 655.7,564.7 660.6,557.2 666.8,556.7 670.0,553.5 676.2,548.6 682.4,547.3 688.6,552.3 693.5,563.4 699.7,583.2 704.7,611.7 709.6,629.0 714.6,635.2 718.3,636.4 722.0,648.8 726.9,666.1 733.1,679.8 739.3,688.4 744.3,693.4 749.2,693.4 754.2,678.5 757.9,671.1 762.8,673.6 767.8,671.1 772.7,664.9 778.9,662.4 783.9,648.8 788.8,626.5 793.8,614.2 800.0,605.5 804.9,601.8 809.9,610.4 813.6,626.5 818.5,648.8 823.5,668.6 829.7,678.5 835.8,684.0 840.8,684.7 845.7,677.3 851.9,672.3 856.9,663.7 861.8,646.3 865.0,634.0 870.0,609.2 874.9,588.2 879.9,586.9 884.8,596.8 889.8,596.8 894.7,609.2 899.7,629.0 902.1,641.4 905.8,631.5 910.8,616.6 917.0,609.2 921.9,596.8 926.9,584.5 933.1,573.3 939.3,568.4 944.2,559.7 949.2,554.8 954.1,565.9 959.1,583.2 964.0,599.3 969.0,616.6 973.9,638.9 978.9,656.2 983.8,664.9 988.8,668.6 991.2,673.6 995.0,653.8 998.7,635.2 1000.0,638.9 1005.0,614.2 1009.9,591.9 1014.9,578.3 1019.8,572.1 1026.0,566.6 1029.7,577.0 1033.4,600.5 1038.4,627.8 1043.3,650.0 1048.3,671.1 1053.2,687.2 1059.4,698.3 1065.6,705.7 1070.5,708.7 1075.5,704.5 1079.2,698.3 1082.9,678.5 1086.6,656.2 1090.3,636.4 1094.1,619.1 1097.8,604.3" fill="none" stroke="#0a9648" stroke-width="1" shape-rendering="crispEdges" />
<polyline points="90.4,603.0 93.7,583.2 98.6,572.1 102.3,561.7 106.0,586.9 109.8,614.2 114.7,638.9 118.4,624.1 122.1,599.3 125.8,580.7 130.8,583.2 135.7,582.7 139.5,591.9 143.2,614.2 146.9,648.8 150.6,678.5 154.3,696.3 159.3,697.1 164.2,685.9 169.2,676.0 174.1,664.9 179.1,655.0 182.8,663.7 186.5,677.3 191.4,690.9 196.4,700.8 198.9,705.2 202.6,697.1 207.5,694.6 211.2,684.7 216.2,667.4 219.9,683.5 223.6,695.8 228.6,708.7 232.3,688.4 237.2,669.9 240.9,673.6 245.9,672.3 249.6,663.7 253.3,621.6 258.3,591.9 263.2,580.7 268.2,572.1 271.9,588.2 275.6,595.6 279.3,592.4 280.0,599.3 283.7,583.2 288.7,567.1 291.1,570.8 294.9,569.6 299.8,577.0 303.5,611.7 306.7,638.9 310.9,624.1 317.1,604.3 320.8,578.3 325.8,568.4 329.5,565.9 333.2,567.1 338.2,579.5 341.9,601.8 345.6,620.3 349.3,635.2 353.0,630.2 356.7,629.0 360.4,651.3 365.4,671.1 370.3,685.9 375.3,694.6 381.0,702.8 385.2,693.4 388.9,683.5 392.6,664.9 396.3,638.9 399.3,629.0 403.8,634.0 408.7,640.1 412.4,651.3 417.4,668.6 422.3,685.9 426.0,697.1 428.5,673.6 431.5,634.0 434.7,640.1 438.4,664.9 443.4,683.5 448.3,693.4 453.3,684.7 458.2,671.1 463.2,651.3 468.1,640.1 471.8,614.2 475.0,595.6 478.7,590.6 483.7,580.7 488.6,572.1 493.6,563.4 497.3,556.0 502.2,559.7 507.2,551.0 512.1,554.8 516.3,580.7 519.6,564.7 522.5,558.5 528.2,569.6 534.4,578.3 539.4,558.5 543.1,551.0 548.0,560.9 553.0,588.2 557.9,606.7 562.9,610.4 567.8,614.2 572.0,612.9 574.0,620.3 576.5,614.2 581.4,641.4 586.4,664.9 590.8,683.5 593.8,678.5 598.8,684.7 603.2,690.4 606.2,684.7 609.4,663.7 612.4,673.6 617.3,687.2 621.5,693.4 624.8,678.5 628.0,658.7 630.4,657.5 633.4,641.4 637.1,609.2 641.3,585.7 645.8,572.1 650.7,560.9 655.7,551.0 660.1,546.1 662.6,556.0 668.1,553.5 670.0,549.8 675.0,542.4 678.7,547.3 681.1,544.9 686.1,554.8 691.0,567.1 696.0,583.2 700.9,611.7 704.7,646.3 708.4,657.5 713.3,641.4 716.5,635.2 719.5,651.3 723.2,673.6 726.9,684.7 730.6,685.9 735.6,693.4 741.8,700.3 746.7,697.8 750.4,683.5 754.2,658.7 756.6,656.2 760.3,673.6 765.3,681.5 767.8,663.7 771.5,656.2 776.4,661.2 780.1,656.2 783.9,634.0 787.6,603.0 790.0,588.2 792.5,606.7 796.2,610.4 801.2,591.9 804.9,599.3 808.6,614.2 812.3,634.0 816.0,662.4 819.8,683.5 822.7,690.4 827.2,679.8 830.9,687.2 835.8,689.7 840.8,683.5 846.2,667.4 848.7,672.3 853.2,663.7 858.1,638.9 861.8,622.8 865.0,609.2 868.7,586.9 872.4,579.5 876.1,564.7 878.6,579.5 882.3,599.3 886.0,606.7 891.0,595.6 894.7,611.7 898.4,636.4 901.6,660.0 904.6,638.9 908.3,606.7 911.5,599.3 915.7,608.0 919.5,599.3 924.4,574.6 929.4,564.7 933.1,563.4 936.8,570.8 941.7,557.2 947.9,546.1 951.6,562.2 955.3,586.9 960.3,604.3 964.0,616.6 969.0,636.4 972.7,646.3 976.4,671.1 981.3,685.4 984.3,668.6 987.5,676.0 990.5,683.5 993.2,663.7 996.2,636.4 999.9,614.2 1000.0,609.2 1005.0,582.0 1009.9,574.6 1014.9,562.2 1018.6,565.9 1021.0,569.6 1023.5,559.7 1026.0,560.9 1028.5,574.6 1030.9,611.7 1034.7,641.4 1038.4,653.8 1042.1,668.6 1045.8,685.9 1050.7,700.8 1055.7,706.2 1060.6,706.2 1065.6,712.7 1070.5,709.5 1074.3,700.8 1078.0,693.4 1080.4,678.5 1082.9,656.2 1086.6,629.0 1090.3,614.2 1093.6,594.4 1096.0,582.0 1097.8,579.5" fill="none" stroke="#ff0000" stroke-width="1" shape-rendering="crispEdges" />
<polyline points="90.4,635.2 93.7,623.6 98.6,623.6 102.3,620.3 104.8,629.0 107.3,625.3 109.8,631.5 113.5,635.9 117.2,625.3 122.1,611.7 126.6,596.8 129.6,609.2 134.5,606.7 138.2,614.2 143.2,629.0 148.1,643.9 151.8,651.3 155.5,645.1 158.8,643.9 162.5,635.9 169.2,642.6 174.1,640.9 177.8,635.2 182.8,648.8 187.7,656.2 193.9,661.2 198.9,670.6 202.6,662.4 205.0,664.9 211.2,655.0 213.7,657.5 217.4,656.2 219.9,666.1 224.9,668.6 228.6,671.6 231.8,651.8 234.8,655.0 238.0,652.5 240.9,658.2 247.1,659.2 250.3,655.0 253.3,629.0 255.8,614.2 262.0,612.9 267.7,608.7 270.6,624.1 273.6,635.2 276.8,625.3 280.0,617.9 285.0,601.8 288.7,596.8 291.1,606.7 293.6,603.0 298.6,611.7 302.3,616.6 306.0,629.0 309.2,614.2 313.4,615.4 317.1,606.7 322.1,588.2 324.1,598.1 326.5,590.6 332.0,600.5 338.2,611.7 342.4,620.3 346.8,614.2 350.5,612.9 354.3,606.7 358.0,620.3 362.9,627.8 366.1,641.4 370.3,643.9 377.8,651.3 381.5,660.0 385.2,651.3 390.1,645.8 393.4,648.3 396.3,634.0 399.6,612.9 401.3,629.0 406.2,629.0 411.2,633.5 414.9,640.1 419.9,636.4 424.8,638.9 427.3,641.4 429.8,627.8 432.2,626.5 435.9,640.1 439.7,656.2 445.8,661.2 450.8,651.3 453.3,655.0 457.0,640.1 461.9,636.9 465.6,643.9 469.4,638.9 473.1,629.0 475.0,626.5 480.0,632.0 482.4,622.8 486.1,624.1 489.9,614.2 493.6,615.4 496.0,610.4 502.2,616.6 507.2,601.8 510.9,593.1 513.4,596.8 516.3,616.6 519.6,598.1 524.5,596.8 530.7,594.9 534.4,590.6 538.1,575.8 543.8,565.9 548.0,586.9 551.7,596.8 555.4,608.7 560.4,600.5 565.3,595.6 569.1,598.1 572.8,609.2 576.0,599.3 579.0,621.6 585.1,623.6 590.8,632.7 593.8,626.5 597.5,632.7 601.2,630.2 603.7,633.5 608.7,627.0 612.4,638.9 616.1,649.6 621.0,649.6 626.0,635.2 630.4,641.4 634.7,625.3 637.1,609.2 639.6,611.7 643.3,606.7 645.8,611.7 649.5,596.8 655.7,586.9 660.6,579.5 663.6,589.4 668.1,575.8 670.0,573.3 675.0,567.1 679.9,560.9 686.1,556.0 689.8,553.5 693.5,559.7 697.2,573.3 700.9,582.0 705.9,616.6 708.4,601.8 711.6,594.4 717.0,605.5 720.7,625.3 725.7,638.9 731.9,636.4 736.8,642.6 741.8,653.8 748.0,651.3 753.7,637.7 756.6,643.9 759.6,657.5 765.3,655.0 769.0,640.1 772.7,643.9 777.7,648.3 782.6,640.1 786.3,629.0 790.0,617.9 792.5,634.0 795.0,629.0 798.7,622.8 803.7,625.3 806.1,630.2 811.1,629.0 817.3,641.4 823.5,638.9 827.2,636.4 831.4,663.2 834.6,656.2 839.6,656.2 844.5,648.3 849.5,653.8 854.4,642.6 858.1,643.9 861.8,640.1 865.0,640.1 868.7,635.2 872.4,637.7 876.1,617.9 878.6,625.3 882.3,634.0 886.0,626.5 889.8,620.3 894.7,630.2 897.2,627.8 900.9,642.6 904.6,631.5 909.6,616.6 915.7,625.3 919.5,612.9 923.2,601.8 928.1,600.5 933.1,599.3 936.8,608.0 939.3,593.1 944.2,591.9 949.2,588.2 952.9,596.8 957.8,610.4 960.3,605.5 964.0,612.9 967.7,609.2 971.4,614.2 975.1,634.0 981.3,629.0 985.0,622.8 987.5,630.2 991.2,645.1 994.2,619.1 997.4,625.3 1000.0,622.8 1005.0,612.9 1007.4,617.9 1011.1,616.6 1014.9,590.6 1017.8,600.5 1021.0,601.8 1023.5,594.4 1026.7,596.8 1029.7,614.2 1032.7,637.7 1037.1,630.2 1040.8,627.8 1044.6,643.9 1048.3,652.5 1053.2,655.0 1056.9,651.3 1060.6,656.2 1065.6,663.7 1070.5,666.1 1075.0,660.0 1077.2,664.9 1080.4,646.3 1084.2,642.6 1089.1,637.7 1093.6,634.0 1095.3,627.8 1097.8,630.2" fill="none" stroke="#ffff80" stroke-width="1" shape-rendering="crispEdges" />
<text x="703" y="142" fill="#e0e0e0" font-size="12" text-anchor="start" >1.1711</text>
<path d="M688.5 130.5L700 136" stroke="#e0e0e0" stroke-width="1" fill="none"/><path d="M686 129h4l-4 4z" fill="#e0e0e0"/>
<text x="258" y="398" fill="#e0e0e0" font-size="12" text-anchor="start" >1.0808</text>
<path d="M256 393L245 400" stroke="#e0e0e0" stroke-width="1" fill="none"/><path d="M242 402v-5l5 5z" fill="#e0e0e0"/>
<text x="86" y="134" fill="#e8e8e8" font-size="12" text-anchor="end" >1.1711</text>
<text x="86" y="164" fill="#e8e8e8" font-size="12" text-anchor="end" >1.1612</text>
<text x="86" y="194" fill="#e8e8e8" font-size="12" text-anchor="end" >1.1513</text>
<text x="86" y="224" fill="#e8e8e8" font-size="12" text-anchor="end" >1.1413</text>
<text x="86" y="255" fill="#e8e8e8" font-size="12" text-anchor="end" >1.1311</text>
<text x="86" y="285" fill="#e8e8e8" font-size="12" text-anchor="end" >1.1212</text>
<text x="86" y="315" fill="#e8e8e8" font-size="12" text-anchor="end" >1.1112</text>
<text x="86" y="346" fill="#e8e8e8" font-size="12" text-anchor="end" >1.1010</text>
<text x="86" y="376" fill="#e8e8e8" font-size="12" text-anchor="end" >1.0911</text>
<text x="86" y="407" fill="#e8e8e8" font-size="12" text-anchor="end" >1.0808</text>
<text x="86" y="424" fill="#ff3232" font-size="12" text-anchor="end" >12.2043</text>
<text x="86" y="477" fill="#ff3232" font-size="12" text-anchor="end" >2.2865</text>
<text x="86" y="530" fill="#00f000" font-size="12" text-anchor="end" >-7.6313</text>
<text x="86" y="548" fill="#ff3232" font-size="12" text-anchor="end" >94.2955</text>
<text x="86" y="590" fill="#ff3232" font-size="12" text-anchor="end" >72.6020</text>
<text x="86" y="633" fill="#ff3232" font-size="12" text-anchor="end" >50.3921</text>
<text x="86" y="676" fill="#ff3232" font-size="12" text-anchor="end" >28.1821</text>
<text x="86.5" y="727" fill="#ff3232" font-size="12" text-anchor="end" >08</text>
<text x="119" y="727" fill="#ff3232" font-size="12" text-anchor="end" >10</text>
<text x="149" y="727" fill="#ff3232" font-size="12" text-anchor="end" >14</text>
<text x="179" y="727" fill="#ff3232" font-size="12" text-anchor="end" >15</text>
<text x="209" y="727" fill="#ff3232" font-size="12" text-anchor="end" >17</text>
<text x="239" y="727" fill="#ff3232" font-size="12" text-anchor="end" >21</text>
<text x="269" y="727" fill="#ff3232" font-size="12" text-anchor="end" >22</text>
<text x="299" y="727" fill="#ff3232" font-size="12" text-anchor="end" >24</text>
<text x="329" y="727" fill="#ff3232" font-size="12" text-anchor="end" >28</text>
<text x="359" y="727" fill="#ff3232" font-size="12" text-anchor="end" >29</text>
<text x="389" y="727" fill="#ff3232" font-size="12" text-anchor="end" >31</text>
<text x="419" y="727" fill="#ff3232" font-size="12" text-anchor="end" >04</text>
<text x="449" y="727" fill="#ff3232" font-size="12" text-anchor="end" >05</text>
<text x="479" y="727" fill="#ff3232" font-size="12" text-anchor="end" >07</text>
<text x="509" y="727" fill="#ff3232" font-size="12" text-anchor="end" >11</text>
<text x="539" y="727" fill="#ff3232" font-size="12" text-anchor="end" >12</text>
<text x="569" y="727" fill="#ff3232" font-size="12" text-anchor="end" >14</text>
<text x="599" y="727" fill="#ff3232" font-size="12" text-anchor="end" >18</text>
<text x="629" y="727" fill="#ff3232" font-size="12" text-anchor="end" >19</text>
<text x="659" y="727" fill="#ff3232" font-size="12" text-anchor="end" >21</text>
<text x="689" y="727" fill="#ff3232" font-size="12" text-anchor="end" >25</text>
<text x="719" y="727" fill="#ff3232" font-size="12" text-anchor="end" >26</text>
<text x="749" y="727" fill="#ff3232" font-size="12" text-anchor="end" >28</text>
<text x="779" y="727" fill="#ff3232" font-size="12" text-anchor="end" >01</text>
<text x="809" y="727" fill="#ff3232" font-size="12" text-anchor="end" >02</text>
<text x="839" y="727" fill="#ff3232" font-size="12" text-anchor="end" >04</text>
<text x="869" y="727" fill="#ff3232" font-size="12" text-anchor="end" >08</text>
<text x="899" y="727" fill="#ff3232" font-size="12" text-anchor="end" >09</text>
<text x="929" y="727" fill="#ff3232" font-size="12" text-anchor="end" >11</text>
<text x="959" y="727" fill="#ff3232" font-size="12" text-anchor="end" >15</text>
<text x="989" y="727" fill="#ff3232" font-size="12" text-anchor="end" >16</text>
<text x="1019" y="727" fill="#ff3232" font-size="12" text-anchor="end" >18</text>
<text x="1049" y="727" fill="#ff3232" font-size="12" text-anchor="end" >22</text>
<text x="1079" y="727" fill="#ff3232" font-size="12" text-anchor="end" >23</text>
<text x="88" y="125" font-size="12"><tspan fill="#54ffff">欧元/美元</tspan><tspan fill="#ffff00" dx="4">MA30: 1.1242</tspan><tspan fill="#ff00ff" dx="3">MA60: 1.1270</tspan></text>
<text x="88" y="415" font-size="12"><tspan fill="#ffff00">MACD(26,12,9) DIFF: -2.4298</tspan><tspan fill="#ffffff" x="253.5">DEA: -3.3891</tspan><tspan fill="#ff3232" x="330">MACD: 1.9186</tspan></text>
<text x="88" y="539" font-size="12"><tspan fill="#ff0000">KDR(9,3,3,14) K: 75.4288</tspan><tspan fill="#0a9648" x="233.5">D: 62.7129</tspan><tspan fill="#ffffc0" x="297.5">RSI1: 47.6129</tspan><tspan fill="#4040ff" x="378.5">AA1: 30.0000</tspan><tspan fill="#ffffa0" x="454">AA2: 50.0000</tspan><tspan fill="#20f0f0" x="530">AA3: 70.0000</tspan></text>
<rect x="2" y="94" width="16" height="16" fill="#d0d0d0"/><path d="M4 100h5v-3l4 5l-4 5v-3h-5z" fill="#8b0000"/><rect x="12.5" y="96.5" width="3" height="11" fill="#e8b0b0" stroke="#e00000" stroke-width="1"/>
<text x="21" y="107" fill="#fff" font-size="13" font-weight="bold" textLength="139" lengthAdjust="spacingAndGlyphs" font-family="'Liberation Serif','Noto Serif CJK SC',serif">240分钟 K线 MACD KDR</text>
<path d="M3 112h17v60l-17-6z" fill="#808080"/><path d="M3 173h17v60l-17-6z" fill="#808080"/><path d="M3 234h17v63l-17-7z" fill="#808080"/>
<text x="11.5" y="127" fill="#000" font-size="12" text-anchor="middle" font-weight="bold">分</text>
<text x="11.5" y="139" fill="#000" font-size="12" text-anchor="middle" font-weight="bold">时</text>
<text x="11.5" y="151" fill="#000" font-size="12" text-anchor="middle" font-weight="bold">走</text>
<text x="11.5" y="163" fill="#000" font-size="12" text-anchor="middle" font-weight="bold">势</text>
<text x="11.5" y="189" fill="#000" font-size="12" text-anchor="middle" font-weight="bold">报</text>
<text x="11.5" y="201" fill="#000" font-size="12" text-anchor="middle" font-weight="bold">价</text>
<text x="11.5" y="213" fill="#000" font-size="12" text-anchor="middle" font-weight="bold">明</text>
<text x="11.5" y="225" fill="#000" font-size="12" text-anchor="middle" font-weight="bold">细</text>
<text x="11.5" y="250" fill="#000" font-size="12" text-anchor="middle" font-weight="bold">历</text>
<text x="11.5" y="262" fill="#000" font-size="12" text-anchor="middle" font-weight="bold">史</text>
<text x="11.5" y="274" fill="#000" font-size="12" text-anchor="middle" font-weight="bold">报</text>
<text x="11.5" y="286" fill="#000" font-size="12" text-anchor="middle" font-weight="bold">价</text>
</svg>
<svg width="1366" height="768" viewBox="0 0 1366 768" style="position:absolute;left:0;top:0" font-family="'Liberation Sans','Noto Sans CJK SC',sans-serif">
<g shape-rendering="crispEdges">
<path d="M1103.5 419.5V94.5H1363.5V419.5z" fill="none" stroke="#fff" stroke-width="1"/>
<path d="M1104 150.5H1363M1104 258.5H1363M1104 365.5H1363" stroke="#c00000" stroke-width="1" fill="none"/>
<path d="M1104 440.5H1364M1104 460.5H1364M1104 479.5H1364M1104 498.5H1364M1104 518.5H1364M1104 537.5H1364M1104 556.5H1364M1104 595.5H1364M1104 614.5H1364M1104 634.5H1364M1104 653.5H1364M1104 673.5H1364M1104 692.5H1364M1104 712.5H1364M1104 731.5H1364" stroke="#c00000" stroke-width="1" fill="none"/>
<rect x="1104" y="575" width="260" height="3" fill="#c00000"/>
<path d="M1103.5 420V735M1147.5 420V735M1190.5 420V735M1234.5 420V735M1277.5 420V735M1320.5 420V735M1363.5 420V735" stroke="#c00000" stroke-width="1" fill="none"/>
<line x1="1126.5" y1="423" x2="1126.5" y2="731" stroke="#c00000" stroke-width="1" stroke-dasharray="1 2"/>
<line x1="1169.5" y1="423" x2="1169.5" y2="731" stroke="#c00000" stroke-width="1" stroke-dasharray="1 2"/>
<line x1="1212.5" y1="423" x2="1212.5" y2="731" stroke="#c00000" stroke-width="1" stroke-dasharray="1 2"/>
<line x1="1256.5" y1="423" x2="1256.5" y2="731" stroke="#c00000" stroke-width="1" stroke-dasharray="1 2"/>
<line x1="1299.5" y1="423" x2="1299.5" y2="731" stroke="#c00000" stroke-width="1" stroke-dasharray="1 2"/>
<line x1="1342.5" y1="423" x2="1342.5" y2="731" stroke="#c00000" stroke-width="1" stroke-dasharray="1 2"/>
</g>
<polyline points="1104.6,583.3 1105.2,571.0 1105.9,549.5 1106.5,571.0 1107.2,583.3 1108.5,597.3 1109.4,605.8 1110.4,592.1 1111.0,576.5 1112.4,583.0 1113.4,575.2 1114.3,600.6 1115.4,587.6 1116.3,598.6 1117.6,601.3 1117.6,643.6 1118.9,630.5 1119.5,640.3 1120.6,661.8 1121.5,642.9 1122.4,648.1 1123.4,656.6 1124.5,639.0 1125.4,653.3 1126.4,652.0 1126.7,627.3 1127.6,635.1 1128.0,601.3 1128.9,613.0 1129.7,618.8 1130.2,585.6 1131.3,605.2 1131.9,583.0 1133.2,589.5 1134.1,579.8 1135.2,592.8 1135.8,576.5 1136.7,562.5 1137.8,578.1 1138.8,567.7 1139.7,561.2 1141.0,557.3 1141.9,544.3 1143.0,554.7 1144.3,561.2 1145.8,570.3 1147.5,557.3 1148.4,552.1 1149.5,531.3 1150.5,552.1 1151.4,561.2 1152.7,572.9 1153.6,557.3 1154.4,587.2 1155.7,596.4 1156.6,575.5 1157.3,557.3 1158.2,549.5 1159.2,531.3 1160.5,527.3 1161.5,537.8 1162.5,543.0 1163.4,523.4 1164.5,537.8 1165.5,527.3 1166.4,539.1 1167.7,549.5 1169.0,557.3 1169.7,536.5 1170.7,565.1 1171.6,587.2 1172.3,549.5 1172.7,536.5 1173.6,565.1 1174.5,526.0 1175.3,505.2 1175.5,471.3 1176.7,432.6 1177.4,471.3 1178.6,478.3 1179.7,497.1 1180.9,476.0 1182.1,504.1 1183.3,480.7 1184.4,445.5 1185.6,457.2 1186.8,437.3 1187.9,452.5 1189.1,466.6 1190.3,438.5 1191.1,480.0 1191.8,510.4 1193.1,523.4 1194.0,533.9 1194.8,570.3 1195.7,556.0 1196.6,566.4 1197.4,545.6 1197.9,533.9 1199.0,516.9 1200.2,494.0 1201.3,518.2" fill="none" stroke="#c8c8c8" stroke-width="1" shape-rendering="crispEdges"/>
<polyline points="1105.4,583.9 1106.0,571.6 1106.7,550.1 1107.3,571.6 1108.0,583.9 1109.3,597.9 1110.2,606.4 1111.2,592.7 1111.8,577.1 1113.2,583.6 1114.2,575.8 1115.1,601.2 1116.2,588.2 1117.1,599.2 1118.4,601.9 1118.4,644.2 1119.7,631.1 1120.3,640.9 1121.4,662.4 1122.3,643.5 1123.2,648.7 1124.2,657.2 1125.3,639.6 1126.2,653.9 1127.2,652.6 1127.5,627.9 1128.4,635.7 1128.8,601.9 1129.7,613.6 1130.5,619.4 1131.0,586.2 1132.1,605.8 1132.7,583.6 1134.0,590.1 1134.9,580.4 1136.0,593.4 1136.6,577.1 1137.5,563.1 1138.6,578.7 1139.6,568.3 1140.5,561.8 1141.8,557.9 1142.7,544.9 1143.8,555.3 1145.1,561.8 1146.6,570.9 1148.3,557.9 1149.2,552.7 1150.3,531.9 1151.3,552.7 1152.2,561.8 1153.5,573.5 1154.4,557.9 1155.2,587.8 1156.5,597.0 1157.4,576.1 1158.1,557.9 1159.0,550.1 1160.0,531.9 1161.3,527.9 1162.3,538.4 1163.3,543.6 1164.2,524.0 1165.3,538.4 1166.3,527.9 1167.2,539.7 1168.5,550.1 1169.8,557.9 1170.5,537.1 1171.5,565.7 1172.4,587.8 1173.1,550.1 1173.5,537.1 1174.4,565.7 1175.3,526.6 1176.1,505.8 1176.3,471.9 1177.5,433.2 1178.2,471.9 1179.4,478.9 1180.5,497.7 1181.7,476.6 1182.9,504.7 1184.1,481.3 1185.2,446.1 1186.4,457.8 1187.6,437.9 1188.7,453.1 1189.9,467.2 1191.1,439.1 1191.9,480.6 1192.6,511.0 1193.9,524.0 1194.8,534.5 1195.6,570.9 1196.5,556.6 1197.4,567.0 1198.2,546.2 1198.7,534.5 1199.8,517.5 1201.0,494.6 1202.1,518.8" fill="none" stroke="#c8c8c8" stroke-width="1" shape-rendering="crispEdges"/>
<text x="1105.5" y="744" fill="#f02020" font-size="12" text-anchor="start" >08:00</text>
<text x="1148.5" y="744" fill="#f02020" font-size="12" text-anchor="start" >12:00</text>
<text x="1192" y="744" fill="#f02020" font-size="12" text-anchor="start" >16:00</text>
<text x="1235.5" y="744" fill="#f02020" font-size="12" text-anchor="start" >20:00</text>
<text x="1278.5" y="744" fill="#f02020" font-size="12" text-anchor="start" >00:00</text>
<text x="1321.5" y="744" fill="#f02020" font-size="12" text-anchor="start" >04:00</text>
<text x="1232" y="115" fill="#ffff00" font-size="16" text-anchor="middle" >欧元/美元</text>
<text x="1232" y="141" fill="#c8c8c8" font-size="13" text-anchor="middle" font-weight="bold" letter-spacing="0.4">EURUSD</text>
<text x="1105" y="169" fill="#fff" font-size="16" text-anchor="start" >现价</text>
<text x="1361" y="168" fill="#ff3232" font-size="14" text-anchor="end" font-weight="bold">1.1197</text>
<text x="1105" y="196" fill="#fff" font-size="16" text-anchor="start" >涨跌</text>
<text x="1361" y="195" fill="#ff3232" font-size="14" text-anchor="end" font-weight="bold">0.0013</text>
<text x="1105" y="223" fill="#fff" font-size="16" text-anchor="start" >涨幅</text>
<text x="1361" y="222" fill="#ff3232" font-size="14" text-anchor="end" font-weight="bold">+0.1162%</text>
<text x="1105" y="250" fill="#fff" font-size="16" text-anchor="start" >震幅</text>
<text x="1361" y="249" fill="#00e0e0" font-size="14" text-anchor="end" font-weight="bold">0.54%</text>
<text x="1105" y="277" fill="#fff" font-size="16" text-anchor="start" >昨收</text>
<text x="1105" y="304" fill="#fff" font-size="16" text-anchor="start" >开盘</text>
<text x="1105" y="331" fill="#fff" font-size="16" text-anchor="start" >最高</text>
<text x="1105" y="358" fill="#fff" font-size="16" text-anchor="start" >最低</text>
<text x="1105" y="385" fill="#fff" font-size="16" text-anchor="start" >买价</text>
<text x="1105" y="412" fill="#fff" font-size="16" text-anchor="start" >卖价</text>
<path d="M25.5 733H64.5L67 740L64.5 747H32z" fill="#808080"/>
<text x="35" y="744" fill="#000018" font-size="10.8" text-anchor="start" font-weight="bold">CMA</text>
<path d="M66.5 733H106.5L109 740L106.5 747H73z" fill="#808080"/>
<text x="75.5" y="744" fill="#000018" font-size="10.8" text-anchor="start" font-weight="bold">BOLL</text>
<path d="M109.5 733H146.5L149 740L146.5 747H116z" fill="#808080"/>
<text x="118.6" y="744" fill="#000018" font-size="10.8" text-anchor="start" font-weight="bold">BIAS</text>
<path d="M149.5 733H186.5L189 740L186.5 747H156z" fill="#808080"/>
<text x="158" y="744" fill="#000018" font-size="10.8" text-anchor="start" font-weight="bold">MIKE</text>
<path d="M188.5 733H223.5L226 740L223.5 747H195z" fill="#808080"/>
<text x="197.7" y="744" fill="#000018" font-size="10.8" text-anchor="start" font-weight="bold">ROC</text>
<path d="M225.5 733H266.5L269 740L266.5 747H232z" fill="#808080"/>
<text x="234" y="744" fill="#000018" font-size="10.8" text-anchor="start" font-weight="bold">ARBR</text>
<path d="M268.5 733H300.5L303 740L300.5 747H275z" fill="#808080"/>
<text x="277.6" y="744" fill="#000018" font-size="10.8" text-anchor="start" font-weight="bold">DMI</text>
<path d="M301 733H342L336 747H308z" fill="#8b0000"/>
<text x="311.5" y="744" fill="#90ffff" font-size="10.8" text-anchor="start" font-weight="bold">KDR</text>
<path d="M343.5 733H367L369.5 740L366.5 747H343.5L340 740.5z" fill="#808080"/>
<text x="346" y="744" fill="#000018" font-size="10.8" text-anchor="start" font-weight="bold">ASI</text>
<path d="M368.5 733H404.5L407 740L404.5 747H375z" fill="#808080"/>
<text x="378" y="744" fill="#000018" font-size="10.8" text-anchor="start" font-weight="bold">OSC</text>
<path d="M406.5 733H444.5L447 740L444.5 747H413z" fill="#808080"/>
<text x="415" y="744" fill="#000018" font-size="10.8" text-anchor="start" font-weight="bold">VMA</text>
<path d="M446.5 733H485.5L488 740L485.5 747H453z" fill="#808080"/>
<text x="455.6" y="744" fill="#000018" font-size="10.8" text-anchor="start" font-weight="bold">MTM</text>
<path d="M487.5 733H530.5L533 740L530.5 747H494z" fill="#808080"/>
<text x="496.6" y="744" fill="#000018" font-size="10.8" text-anchor="start" font-weight="bold">MASS</text>
<path d="M532.5 733H569.5L572 740L569.5 747H539z" fill="#808080"/>
<text x="542" y="744" fill="#000018" font-size="10.8" text-anchor="start" font-weight="bold">CDP</text>
<path d="M571.5 733H608.5L611 740L608.5 747H578z" fill="#808080"/>
<text x="578.6" y="744" fill="#000018" font-size="10.8" text-anchor="start" font-weight="bold">PSY</text>
<g shape-rendering="crispEdges">
<rect x="2" y="748" width="1362" height="2" fill="#c80000"/>
<rect x="2" y="765" width="1362" height="1" fill="#c80000"/>
<rect x="2" y="748" width="2" height="18" fill="#c80000"/>
<rect x="68" y="750" width="2" height="15" fill="#c80000"/>
<rect x="1209" y="750" width="2" height="15" fill="#c80000"/>
<rect x="1233" y="750" width="2" height="15" fill="#c80000"/>
<rect x="1257" y="750" width="2" height="15" fill="#c80000"/>
<rect x="1279" y="750" width="2" height="15" fill="#c80000"/>
<rect x="1287" y="750" width="2" height="15" fill="#c80000"/>
<rect x="1311" y="750" width="2" height="15" fill="#c80000"/>
<rect x="1362" y="750" width="2" height="15" fill="#c80000"/>
</g>
<text x="4.5" y="763" fill="#b00000" font-size="16" text-anchor="start" font-weight="bold" stroke="#e81010" stroke-width="0.5" textLength="60" lengthAdjust="spacingAndGlyphs">300033</text>
<clipPath id="wc"><rect x="1140" y="750" width="69" height="15"/></clipPath>
<text x="1142" y="762" fill="#ff00ff" font-size="12" text-anchor="start" clip-path="url(#wc)" textLength="84">招商银行欢迎您</text>
<text x="1318" y="762" fill="#d000ff" font-size="12" text-anchor="start" textLength="41">17:01:47</text>
<g shape-rendering="crispEdges"><rect x="1215" y="755" width="8" height="7" fill="#c0c0c0" stroke="#fff"/><rect x="1220" y="752" width="9" height="8" fill="#00c0c0" stroke="#fff"/><rect x="1214" y="763" width="10" height="1" fill="#fff"/>
<rect x="1242.5" y="753.5" width="9" height="9" fill="none" stroke="#e0e0e0"/><rect x="1245" y="756" width="4" height="4" fill="#c0c0c0"/><path d="M1239 751l3 3M1255 751l-3 3M1239 765l3-3M1255 765l-3-3" stroke="#e0e0e0" fill="none"/>
<path d="M1294 753h12v8h-3v3l-4-3h-5z" fill="#ffa000"/><path d="M1296 755h8M1296 757h8M1296 759h4" stroke="#000" fill="none"/></g>
<text x="1262" y="763.5" fill="#ffff00" font-size="14" text-anchor="start" font-weight="bold" stroke="#e00000" stroke-width="0.9" paint-order="stroke">记</text>
</svg>
<div class="abs" style="left:0;top:93px;width:1px;height:675px;background:#c0c0c0"></div><div class="abs" style="left:1px;top:93px;width:1px;height:675px;background:#8a8a8a"></div>
<div class="abs" style="left:1364px;top:93px;width:2px;height:675px;background:#f4f6fa"></div>
<div class="abs" style="left:0;top:766px;width:1366px;height:2px;background:#f4f6fa"></div>
<div class="abs" style="left:121px;top:766px;width:44px;height:2px;border:1px solid #6a6a6a;border-bottom:none;background:#fff"></div><div class="abs" style="left:168px;top:766px;width:43px;height:2px;border:1px solid #6a6a6a;border-bottom:none;background:#fff"></div><div class="abs" style="left:213px;top:766px;width:43px;height:2px;border:1px solid #6a6a6a;border-bottom:none;background:#fff"></div><div class="abs" style="left:306px;top:766px;width:43px;height:2px;border:1px solid #6a6a6a;border-bottom:none;background:#fff"></div>
<div id="dlg" class="abs"><div class="dt" style="left:7px;top:7px;letter-spacing:.7px">画线/设置</div><div class="cl">
<svg class="abs" style="left:-1px;top:-1px" width="240" height="139" viewBox="1128 274 240 139">
<g stroke="#3a66b0" stroke-width="1.2" fill="none"><path d="M1143.500 303L1155 291"/><path d="M1169.500 301.500L1180 291"/><path d="M1193.500 291.500L1204.500 302.500"/><path d="M1142 324l6 11M1149 322l6 11"/><path d="M1167 332l7-10M1170 334l7-10M1173 336l7-10"/></g>
<path d="M1160 303v5h-5z" fill="#000"/><g fill="#000"><rect x="1168" y="300" width="3" height="3"/><rect x="1192" y="290" width="3" height="3"/><rect x="1203" y="301" width="3" height="3"/><rect x="1343" y="290" width="3" height="3"/><rect x="1355" y="301" width="3" height="3"/></g>
<g shape-rendering="crispEdges"><path d="M1216.500 285V361M1275.500 285V361M1334.500 285V361" stroke="#404040"/>
<rect x="1227" y="290" width="3" height="15" fill="#2a5aa8"/><path d="M1232.5 290v15M1235.5 297v8M1238.5 297v8" stroke="#2a5aa8"/>
<text x="1234" y="296" font-family="Liberation Serif,serif" font-weight="bold" font-size="8" fill="#000">F</text>
<rect x="1252" y="290" width="3" height="15" fill="#2a5aa8"/><path d="M1257.5 290v15M1260.5 297v8M1263.5 297v8" stroke="#2a5aa8"/>
<text x="1259" y="296" font-family="Liberation Serif,serif" font-weight="bold" font-size="8" fill="#000">L</text>
<rect x="1227" y="322" width="3" height="15" fill="#2a5aa8"/><path d="M1232.5 322v15M1235.5 329v8M1238.5 329v8" stroke="#2a5aa8"/>
<text x="1234" y="328" font-family="Liberation Serif,serif" font-weight="bold" font-size="8" fill="#000">T</text>
<rect x="1252" y="322" width="3" height="15" fill="#2a5aa8"/><path d="M1257.5 322v15M1260.5 329v8M1263.5 329v8" stroke="#2a5aa8"/>
<text x="1259" y="328" font-family="Liberation Serif,serif" font-weight="bold" font-size="8" fill="#000">G</text>
<path d="M1284 291.500h6M1284 293.500h6M1284 295.500h6M1284 298.500h16M1284 301.500h16" stroke="#2a5aa8"/><path d="M1309 292.500h8M1309 295.500h8M1309 298.500h16" stroke="#2a5aa8"/><rect x="1309" y="301" width="16" height="2" fill="#2a5aa8"/>
<path d="M1284 324.500h16M1284 326.500h16M1284 328.500h16M1284 330.500h16M1284 332.500h16" stroke="#2a5aa8"/>
<rect x="1345.500" y="292.500" width="11" height="10" fill="none" stroke="#2a5aa8" stroke-width="1"/>
<path d="M1344 322.500h15M1344 325.500h15M1344 328.500h15M1344 331.500h15M1344 334.500h15M1344.500 322v14M1347.500 322v14M1350.500 322v14M1353.500 322v14M1356.500 322v14" stroke="#2a5aa8"/>
<path d="M1129 369.500H1368" stroke="#a0a0a0"/><path d="M1129 370.500H1368" stroke="#fff"/>
<rect x="1170.500" y="383.500" width="78" height="19" fill="#f0f0f0" stroke="#fff"/><path d="M1249 383.500H1170.500V402" fill="none" stroke="#828282"/>
<rect x="1263.500" y="383.500" width="19" height="19" fill="#f0f0f0" stroke="#696969"/><path d="M1264 384.500H1281.500M1264.500 384V402" stroke="#fff" fill="none"/><rect x="1268.500" y="388.500" width="9" height="9" fill="none" stroke="#303030"/><path d="M1270 391.500h6M1270 393.500h6M1270 395.500h6" stroke="#303030"/>
<rect x="1324.500" y="383.500" width="50" height="19" fill="#fff" stroke="#828282"/>
</g>
<text x="1291" y="297.500" font-family="Liberation Sans,sans-serif" font-weight="bold" font-size="8.500" fill="#000">%</text><text x="1318" y="297" font-family="Liberation Serif,serif" font-weight="bold" font-size="9" fill="#000">G</text>
<g font-family="'Liberation Sans','Noto Sans CJK SC',sans-serif" font-size="12" fill="#000"><text x="1162" y="360">趋势</text><text x="1232.500" y="360">时间</text><text x="1292" y="360">空间</text><text x="1140" y="398">名称</text><text x="1295.500" y="398">线形</text><text x="1327" y="398">直线——</text></g>
<defs><radialGradient id="gb" cx=".4" cy=".3" r=".8"><stop offset="0" stop-color="#7be08a"/><stop offset=".6" stop-color="#3cb850"/><stop offset="1" stop-color="#1e9a38"/></radialGradient></defs><circle cx="1371" cy="351" r="24.500" fill="#d8dcd8" stroke="#b8bcb8" stroke-width="1"/><circle cx="1371" cy="351" r="21.500" fill="url(#gb)"/><text x="1352" y="356" font-family="Liberation Sans,sans-serif" font-weight="bold" font-size="13" fill="#fff">64</text>
</svg></div></div>
</body></html>
